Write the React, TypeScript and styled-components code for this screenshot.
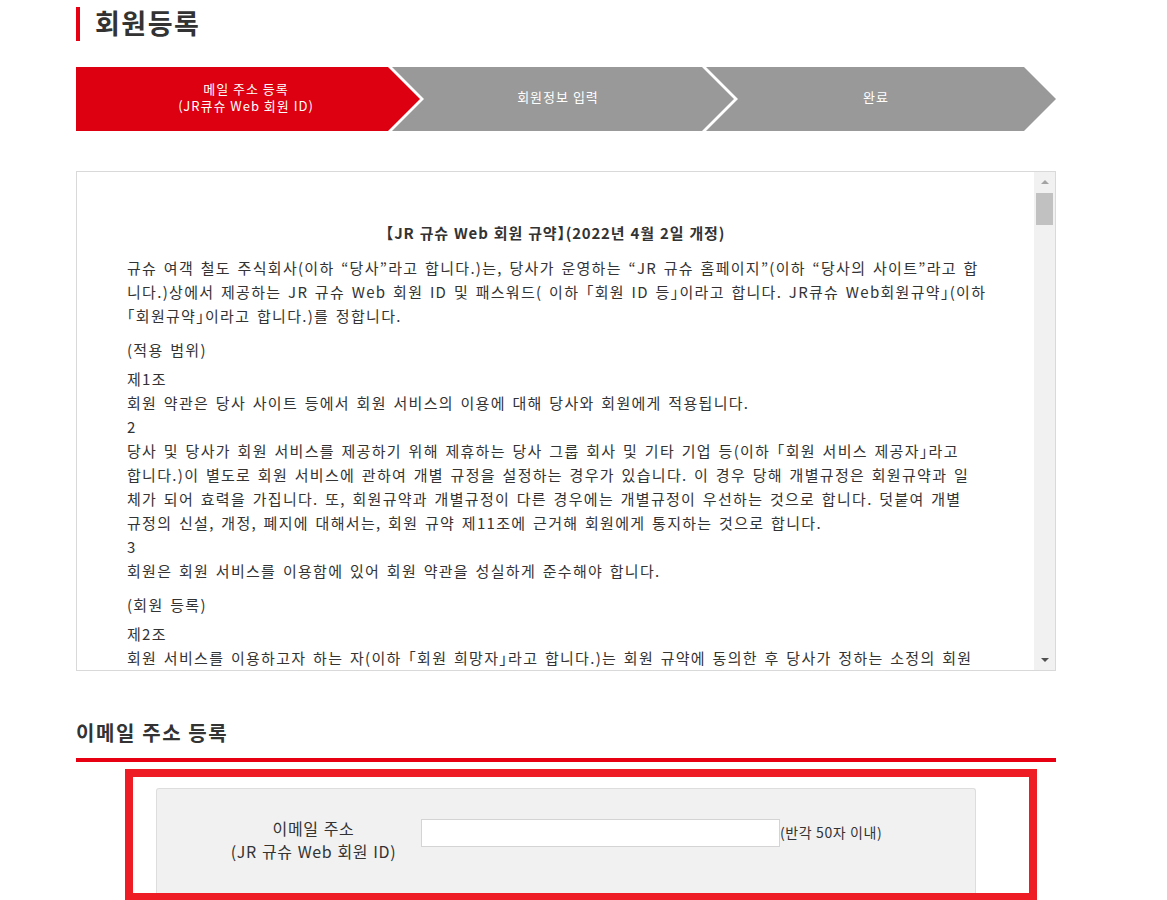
import React from "react";
import styled, { createGlobalStyle } from "styled-components";

const GlobalStyle = createGlobalStyle`
  html, body { margin: 0; padding: 0; background: #ffffff; }
  body {
    font-family: "Noto Sans CJK KR", "Noto Sans", "Liberation Sans", sans-serif;
    color: #333333;
  }
  * { box-sizing: border-box; }
`;

const Page = styled.div`
  width: 980px;
  margin-left: 76px;
  padding-top: 7px;
`;

const PageTitle = styled.h1`
  margin: 0;
  height: 34px;
  border-left: 4px solid #e60012;
  padding-left: 15px;
  padding-bottom: 3px;
  display: flex;
  align-items: center;
  font-size: 27px;
  font-weight: 700;
  color: #333333;
  letter-spacing: 1.5px;
`;

const Steps = styled.ol`
  list-style: none;
  margin: 26px 0 0;
  padding: 0;
  display: flex;
  height: 64px;
`;

const Step = styled.li<{ $active?: boolean; $first?: boolean; $w: number }>`
  flex: none;
  width: ${(p) => p.$w}px;
  height: 64px;
  margin-left: ${(p) => (p.$first ? 0 : -28)}px;
  padding-right: ${(p) => (p.$first ? 4 : 10)}px;
  padding-bottom: 5px;
  background: ${(p) => (p.$active ? "#dc0010" : "#999999")};
  clip-path: ${(p) =>
    p.$first
      ? "polygon(0 0, calc(100% - 32px) 0, 100% 50%, calc(100% - 32px) 100%, 0 100%)"
      : "polygon(0 0, calc(100% - 32px) 0, 100% 50%, calc(100% - 32px) 100%, 0 100%, 32px 50%)"};
  display: flex;
  flex-direction: column;
  align-items: center;
  justify-content: center;
  color: #ffffff;
  font-size: 13px;
  line-height: 17px;
  letter-spacing: 1px;
  text-align: center;
`;

const TermsBox = styled.div`
  margin-top: 40px;
  height: 500px;
  border: 1px solid #d9d9d9;
  display: flex;
`;

const TermsBody = styled.div`
  flex: 1;
  overflow: hidden;
  padding: 49px 50px 0 50px;
  font-size: 15px;
  line-height: 24px;
  letter-spacing: 1.3px;
  word-spacing: 2px;
  font-feature-settings: "halt";
  color: #333333;
`;

const TermsTitle = styled.h2`
  margin: 0 0 11px;
  font-size: 15px;
  line-height: 24px;
  font-weight: 700;
  letter-spacing: 0.8px;
  word-spacing: 1px;
  text-align: center;
  color: #333333;
`;

const Para = styled.p`
  margin: 0 0 10px;
`;

const SubHead = styled.p`
  margin: 0 0 5px;
`;

const Line = styled.span`
  display: block;
  white-space: nowrap;
`;

const ScrollBar = styled.div`
  flex: none;
  width: 21px;
  background: #f1f1f1;
  display: flex;
  flex-direction: column;
`;

const ScrollButton = styled.div<{ $down?: boolean }>`
  height: 20px;
  display: flex;
  align-items: center;
  justify-content: center;
  margin-top: ${(p) => (p.$down ? "auto" : "0")};
  &::after {
    content: "";
    width: 0;
    height: 0;
    border-left: 4px solid transparent;
    border-right: 4px solid transparent;
    ${(p) =>
      p.$down
        ? "border-top: 4px solid #505050;"
        : "border-bottom: 4px solid #a3a3a3;"}
  }
`;

const Thumb = styled.div`
  margin: 1px 2px 0 2px;
  height: 32px;
  background: #c1c1c1;
`;

const SectionTitle = styled.h3`
  margin: 47px 0 0;
  font-size: 20px;
  line-height: 30px;
  font-weight: 700;
  letter-spacing: 1.6px;
  color: #333333;
  padding-bottom: 10px;
  border-bottom: 4px solid #e60012;
`;

const Highlight = styled.div`
  margin: 7px 0 0 49px;
  width: 912px;
  border: 8px solid #ee1c25;
  padding-top: 11px;
  padding-left: 23px;
`;

const FormPanel = styled.div`
  width: 820px;
  height: 105px;
  background: #f1f1f1;
  border: 1px solid #dddddd;
  border-bottom: none;
  border-radius: 3px 3px 0 0;
  padding: 30px 0 0 49px;
  display: flex;
  align-items: flex-start;
`;

const FieldLabel = styled.label`
  width: 215px;
  margin-top: -2px;
  text-align: center;
  font-size: 16px;
  line-height: 23px;
  letter-spacing: 0.6px;
  word-spacing: 1px;
  color: #333333;
`;

const EmailInput = styled.input`
  width: 359px;
  height: 28px;
  margin: 0;
  border: 1px solid #d4d4d4;
  background: #ffffff;
  outline: none;
`;

const Hint = styled.span`
  font-size: 14px;
  line-height: 26px;
  letter-spacing: 0.6px;
  color: #333333;
  white-space: nowrap;
`;

const intro = [
  "규슈 여객 철도 주식회사(이하 “당사”라고 합니다.)는, 당사가 운영하는 “JR 규슈 홈페이지”(이하 “당사의 사이트”라고 합",
  "니다.)상에서 제공하는 JR 규슈 Web 회원 ID 및 패스워드( 이하 「회원 ID 등」이라고 합니다. JR큐슈 Web회원규약」(이하",
  "「회원규약」이라고 합니다.)를 정합니다.",
];

const article1 = [
  "제1조",
  "회원 약관은 당사 사이트 등에서 회원 서비스의 이용에 대해 당사와 회원에게 적용됩니다.",
  "2",
  "당사 및 당사가 회원 서비스를 제공하기 위해 제휴하는 당사 그룹 회사 및 기타 기업 등(이하 「회원 서비스 제공자」라고",
  "합니다.)이 별도로 회원 서비스에 관하여 개별 규정을 설정하는 경우가 있습니다. 이 경우 당해 개별규정은 회원규약과 일",
  "체가 되어 효력을 가집니다. 또, 회원규약과 개별규정이 다른 경우에는 개별규정이 우선하는 것으로 합니다. 덧붙여 개별",
  "규정의 신설, 개정, 폐지에 대해서는, 회원 규약 제11조에 근거해 회원에게 통지하는 것으로 합니다.",
  "3",
  "회원은 회원 서비스를 이용함에 있어 회원 약관을 성실하게 준수해야 합니다.",
];

const article2 = [
  "제2조",
  "회원 서비스를 이용하고자 하는 자(이하 「회원 희망자」라고 합니다.)는 회원 규약에 동의한 후 당사가 정하는 소정의 회원",
];

const renderLines = (lines: string[]) =>
  lines.map((l, i) => <Line key={i}>{l}</Line>);

export default function App() {
  return (
    <>
      <GlobalStyle />
      <Page>
        <PageTitle>회원등록</PageTitle>

        <Steps>
          <Step $active $first $w={344}>
            <span>메일 주소 등록</span>
            <span>(JR큐슈 Web 회원 ID)</span>
          </Step>
          <Step $w={342}>회원정보 입력</Step>
          <Step $w={350}>완료</Step>
        </Steps>

        <TermsBox>
          <TermsBody>
            <TermsTitle>【JR 규슈 Web 회원 규약】(2022년 4월 2일 개정)</TermsTitle>
            <Para>{renderLines(intro)}</Para>
            <SubHead>(적용 범위)</SubHead>
            <Para>{renderLines(article1)}</Para>
            <SubHead>(회원 등록)</SubHead>
            <Para>{renderLines(article2)}</Para>
          </TermsBody>
          <ScrollBar>
            <ScrollButton />
            <Thumb />
            <ScrollButton $down />
          </ScrollBar>
        </TermsBox>

        <SectionTitle>이메일 주소 등록</SectionTitle>

        <Highlight>
          <FormPanel>
            <FieldLabel htmlFor="email">
              이메일 주소
              <br />
              (JR 규슈 Web 회원 ID)
            </FieldLabel>
            <EmailInput id="email" type="text" />
            <Hint>(반각 50자 이내)</Hint>
          </FormPanel>
        </Highlight>
      </Page>
    </>
  );
}
